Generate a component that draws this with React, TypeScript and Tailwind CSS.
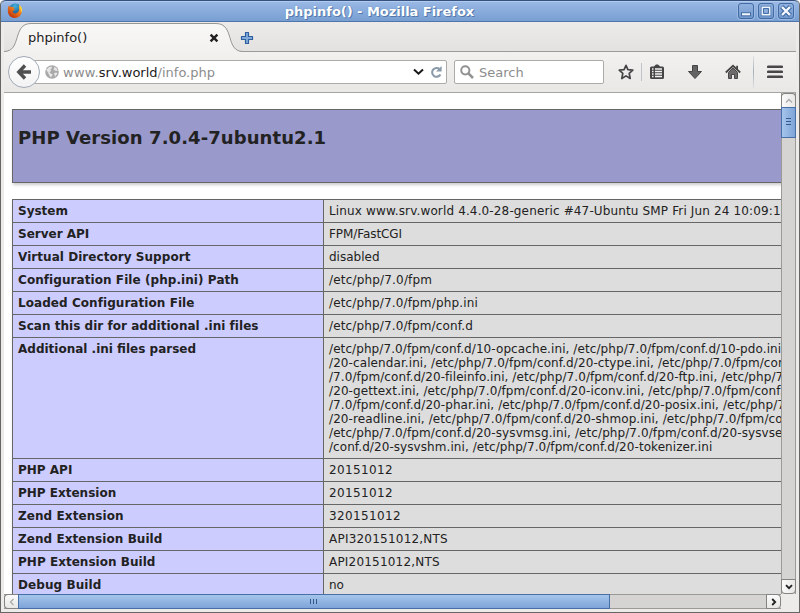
import type { ReactNode } from "react";

type Line = { text: string; tracking: string };
type Row = { name: string; nameTracking: string; lines: Line[] };

const rows: Row[] = [
  {
    name: "System",
    nameTracking: "tracking-normal",
    lines: [
      {
        text: "Linux www.srv.world 4.4.0-28-generic #47-Ubuntu SMP Fri Jun 24 10:09:13 UTC",
        tracking: "tracking-[0.14px]",
      },
    ],
  },
  {
    name: "Server API",
    nameTracking: "tracking-normal",
    lines: [{ text: "FPM/FastCGI", tracking: "tracking-[-0.08px]" }],
  },
  {
    name: "Virtual Directory Support",
    nameTracking: "tracking-[0.05px]",
    lines: [{ text: "disabled", tracking: "tracking-normal" }],
  },
  {
    name: "Configuration File (php.ini) Path",
    nameTracking: "tracking-[0.07px]",
    lines: [{ text: "/etc/php/7.0/fpm", tracking: "tracking-[0.18px]" }],
  },
  {
    name: "Loaded Configuration File",
    nameTracking: "tracking-[0.06px]",
    lines: [{ text: "/etc/php/7.0/fpm/php.ini", tracking: "tracking-[0.15px]" }],
  },
  {
    name: "Scan this dir for additional .ini files",
    nameTracking: "tracking-[0.03px]",
    lines: [{ text: "/etc/php/7.0/fpm/conf.d", tracking: "tracking-[0.14px]" }],
  },
  {
    name: "Additional .ini files parsed",
    nameTracking: "tracking-normal",
    lines: [
      {
        text: "/etc/php/7.0/fpm/conf.d/10-opcache.ini, /etc/php/7.0/fpm/conf.d/10-pdo.ini,",
        tracking: "tracking-[0.09px]",
      },
      {
        text: "/20-calendar.ini, /etc/php/7.0/fpm/conf.d/20-ctype.ini, /etc/php/7.0/fpm/conf.d",
        tracking: "tracking-[0.09px]",
      },
      {
        text: "/7.0/fpm/conf.d/20-fileinfo.ini, /etc/php/7.0/fpm/conf.d/20-ftp.ini, /etc/php/7.0",
        tracking: "tracking-[0.07px]",
      },
      {
        text: "/20-gettext.ini, /etc/php/7.0/fpm/conf.d/20-iconv.ini, /etc/php/7.0/fpm/conf.d",
        tracking: "tracking-[0.1px]",
      },
      {
        text: "/7.0/fpm/conf.d/20-phar.ini, /etc/php/7.0/fpm/conf.d/20-posix.ini, /etc/php/7.0",
        tracking: "tracking-[0.08px]",
      },
      {
        text: "/20-readline.ini, /etc/php/7.0/fpm/conf.d/20-shmop.ini, /etc/php/7.0/fpm/conf.d",
        tracking: "tracking-[0.09px]",
      },
      {
        text: "/etc/php/7.0/fpm/conf.d/20-sysvmsg.ini, /etc/php/7.0/fpm/conf.d/20-sysvsem.ini",
        tracking: "tracking-[0.09px]",
      },
      {
        text: "/conf.d/20-sysvshm.ini, /etc/php/7.0/fpm/conf.d/20-tokenizer.ini",
        tracking: "tracking-[0.07px]",
      },
    ],
  },
  {
    name: "PHP API",
    nameTracking: "tracking-normal",
    lines: [{ text: "20151012", tracking: "tracking-[0.36px]" }],
  },
  {
    name: "PHP Extension",
    nameTracking: "tracking-normal",
    lines: [{ text: "20151012", tracking: "tracking-[0.36px]" }],
  },
  {
    name: "Zend Extension",
    nameTracking: "tracking-[0.08px]",
    lines: [{ text: "320151012", tracking: "tracking-[0.36px]" }],
  },
  {
    name: "Zend Extension Build",
    nameTracking: "tracking-[0.06px]",
    lines: [{ text: "API320151012,NTS", tracking: "tracking-[0.22px]" }],
  },
  {
    name: "PHP Extension Build",
    nameTracking: "tracking-[0.03px]",
    lines: [{ text: "API20151012,NTS", tracking: "tracking-[0.2px]" }],
  },
  {
    name: "Debug Build",
    nameTracking: "tracking-[0.08px]",
    lines: [{ text: "no", tracking: "tracking-normal" }],
  },
];

function FirefoxLogo() {
  return (
    <svg width="16" height="16" viewBox="0 0 16 16">
      <defs>
        <linearGradient id="fox" x1="1" y1="0" x2="0.2" y2="1">
          <stop offset="0" stopColor="#ffdf3c" />
          <stop offset="0.45" stopColor="#f07c1c" />
          <stop offset="1" stopColor="#b92c0c" />
        </linearGradient>
        <radialGradient id="globe" cx="0.5" cy="0.2" r="0.8">
          <stop offset="0" stopColor="#3fb4e0" />
          <stop offset="1" stopColor="#123572" />
        </radialGradient>
      </defs>
      <circle cx="8.2" cy="7.2" r="6.6" fill="url(#globe)" />
      <path
        d="M1.4 2.6L3 4.1C4 3.6 5 3.8 5.6 4.2L7.6 4C7 4.8 6.5 5.2 6.6 5.8L8 6.5C7.8 7.4 6.4 7.4 5.6 8C5.6 10 7.6 10.9 9.3 10.2C11.6 9.3 12.5 7.6 12 5.6C11.7 4.2 12 2.8 12.5 1.9C14.7 3.6 15.4 6.1 14.8 9C14 13 11.3 14.9 8 14.9C4 14.9 1.2 12.2 0.8 8.4C0.7 6.2 0.9 4.4 1.4 2.6Z"
        fill="url(#fox)"
      />
      <path d="M12.5 1.9C15 4 15.5 7 14.5 9.8C14 7.8 13.8 5.4 12.5 1.9Z" fill="#ffe04a" />
    </svg>
  );
}

function WindowButton({ children }: { children: ReactNode }) {
  return (
    <div className="h-4 w-4 rounded-[3px] border border-[#416aa3] bg-linear-to-b from-[#91b2df] to-[#7299cd] shadow-[0_0_0_1px_#9cb9e3]">
      <svg className="block" width="14" height="14" viewBox="0 0 14 14" fill="none">
        {children}
      </svg>
    </div>
  );
}

function TitleBar() {
  return (
    <div className="flex h-[22px] shrink-0 items-center rounded-t-[5px] border-t border-b border-t-[#35517f] border-b-[#4f75ab] bg-linear-to-b from-[#9ab9e6] to-[#789fd2] pr-[5px] pl-1.5 shadow-[inset_0_1px_0_#b2cbef]">
      <FirefoxLogo />
      <div className="flex-1 pt-0.5 pr-[2px] text-center text-[13px] leading-5 font-bold tracking-[-0.03px] text-white [text-shadow:1px_1px_0_#5578aa,0_0_1px_#5578aa]">
        phpinfo() - Mozilla Firefox
      </div>
      <div className="flex gap-1">
        <WindowButton>
          <path d="M2 8.3H12V12.3H2Z" fill="#416aa3" />
          <path d="M3 9.2H11V11.3H3Z" fill="#f1f6fd" />
        </WindowButton>
        <WindowButton>
          <path d="M1.8 1.8H12.2V12.2H1.8Z" fill="#416aa3" />
          <path d="M3.2 3.2H10.8V10.8H3.2Z" fill="#8fb0de" stroke="#eef4fd" strokeWidth="1.4" />
          <path d="M4.6 4.6H9.4V9.4H4.6Z" stroke="#416aa3" strokeWidth="1" />
        </WindowButton>
        <WindowButton>
          <path d="M2.6 2.6L11.4 11.4M11.4 2.6L2.6 11.4" stroke="#416aa3" strokeWidth="4.4" />
          <path d="M3 3L11 11M11 3L3 11" stroke="#f5f9ff" strokeWidth="2.4" />
        </WindowButton>
      </div>
    </div>
  );
}

function TabStrip() {
  return (
    <div className="relative h-[30px] shrink-0 border-b border-[#9b9b98] bg-linear-to-b from-[#ecebe9] to-[#e3e2e0]">
      <svg className="absolute top-0 left-0" width="240" height="30" viewBox="0 0 240 30">
        <defs>
          <linearGradient id="tab" x1="0" y1="0" x2="0" y2="1">
            <stop offset="0" stopColor="#f8f8f7" />
            <stop offset="1" stopColor="#f2f1f0" />
          </linearGradient>
        </defs>
        <path
          d="M0 29.5C18 29.5 8 1.5 27 1.5H212C231 1.5 221 29.5 239 29.5V30H0Z"
          fill="url(#tab)"
        />
        <path
          d="M0 29.5C18 29.5 8 1.5 27 1.5H212C231 1.5 221 29.5 239 29.5"
          fill="none"
          stroke="#969693"
        />
      </svg>
      <div className="relative flex h-[30px] items-center pt-0.5 pl-6 text-[13px] text-[#1c1c1c]">
        <span className="w-[180px]">phpinfo()</span>
        <svg width="12" height="12" viewBox="0 0 12 12">
          <path d="M2.6 2.6L9.4 9.4M9.4 2.6L2.6 9.4" stroke="#222" strokeWidth="2.4" />
        </svg>
        <svg width="14" height="14" viewBox="0 0 14 14" className="ml-5">
          <path
            d="M5.5 1.5H8.5V5.5H12.5V8.5H8.5V12.5H5.5V8.5H1.5V5.5H5.5Z"
            fill="#82abd9"
            stroke="#2f5f9f"
            strokeWidth="1.2"
            strokeLinejoin="round"
          />
        </svg>
      </div>
    </div>
  );
}

function NavBar() {
  return (
    <div className="relative flex h-[41px] shrink-0 items-center border-b border-[#a5a5a2] bg-linear-to-b from-[#f2f1f0] to-[#e9e8e6] pl-5">
      <div className="absolute top-1 left-1 z-10 flex h-8 w-8 items-center justify-center rounded-full border border-[#a1aab5] bg-linear-to-b from-white to-[#f3f3f3]">
        <svg width="16" height="16" viewBox="0 0 16 16" fill="none">
          <path d="M9 1.5L2.8 8L9 14.5M3 8H15" stroke="#4f4f4f" strokeWidth="3.4" />
        </svg>
      </div>
      <div className="flex h-6 w-[423px] shrink-0 items-center rounded-r-[2px] border border-[#adaba8] bg-white pl-5 text-[13px]">
        <svg width="14" height="14" viewBox="0 0 14 14">
          <circle cx="7" cy="7" r="6.8" fill="#a9a9a9" />
          <path
            d="M1.2 4.8L4 2.3L6.5 1.5L7 3L5.2 4.4L6.4 6L4.3 7.1L5.6 8.5L7.8 9.5L6 12.6L4.4 10.6L3 7.4ZM9 1.8L11.6 3.2L12.7 6L10.6 5.7L8.4 4.8L9.2 3.4ZM9 8L11.5 7.6L12.4 8.8L10 11.8Z"
            fill="#e7e7e7"
          />
        </svg>
        <span className="ml-1 flex-1 pt-px text-[#8c8c8c]">
          <span className="tracking-[0.25px]">www.</span>
          <span className="text-[#1c1c1c]">srv.world</span>/info.php
        </span>
        <svg width="11" height="8" viewBox="0 0 11 8" fill="none" className="mr-px">
          <path d="M1 1.5L5.5 5.7L10 1.5" stroke="#181818" strokeWidth="2" />
        </svg>
        <svg width="14" height="14" viewBox="0 0 14 14" fill="none" className="mr-[3px] ml-1">
          <path d="M10.5 4.1A4.4 4.4 0 1 0 11.4 9.5" stroke="#8a9aa8" strokeWidth="2.1" />
          <path d="M12.6 1V6.6H7Z" fill="#8a9aa8" />
        </svg>
      </div>
      <div className="ml-[7px] flex h-6 w-[150px] shrink-0 items-center rounded-[2px] border border-[#adaba8] bg-white pl-[5px] text-[13px] text-[#8c8c8c]">
        <svg width="14" height="14" viewBox="0 0 14 14" fill="none">
          <circle cx="5.3" cy="5.3" r="4.1" stroke="#929292" strokeWidth="2" />
          <path d="M8.2 8.2L13 13" stroke="#929292" strokeWidth="2.5" />
        </svg>
        <span className="ml-[5px] pt-px">Search</span>
      </div>
      <svg width="16" height="16" viewBox="0 0 16 16" className="ml-[14px]" fill="none">
        <path
          d="M8 1.4L9.9 5.7L14.8 6.2L11.2 9.3L12.2 14.5L8 11.9L3.8 14.5L4.8 9.3L1.2 6.2L6.1 5.7Z"
          stroke="#454545"
          strokeWidth="1.7"
          strokeLinejoin="round"
        />
      </svg>
      <div className="ml-[7px] h-[18px] w-px bg-[#bfc4ca]" />
      <svg width="14" height="16" viewBox="0 0 14 16" className="ml-2">
        <path
          d="M1.5 2.5H3.8L6 .6H8L10.2 2.5H12.5Q14 2.5 14 4V13.5Q14 15 12.5 15H1.5Q0 15 0 13.5V4Q0 2.5 1.5 2.5Z"
          fill="#454545"
        />
        <path
          d="M2 5H3.5M5 5H12M2 7.5H3.5M5 7.5H12M2 10H3.5M5 10H12M2 12.5H3.5M5 12.5H12"
          stroke="#f4f4f3"
          strokeWidth="1.6"
        />
      </svg>
      <svg width="16" height="16" viewBox="0 0 16 16" className="ml-[23px]">
        <path d="M5.5 1.5H10.5V7.5H14.5L8 14.5L1.5 7.5H5.5Z" fill="#636363" stroke="#444" strokeLinejoin="round" />
      </svg>
      <svg width="16" height="16" viewBox="0 0 16 16" className="ml-[22px]">
        <path d="M3.5 8.5L8 4L12.5 8.5V14.5H9.5V10.5H6.5V14.5H3.5Z" fill="#6b6b6b" stroke="#484848" />
        <path d="M.8 8.5L8 1.8L15.2 8.5" fill="none" stroke="#454545" strokeWidth="1.8" />
        <path d="M11.2 1.7H13V5H11.2Z" fill="#454545" />
      </svg>
      <div className="ml-[12px] h-8 w-px bg-linear-to-b from-[#dfe2e5] via-[#a3b0bd] to-[#dfe2e5]" />
      <svg width="16" height="14" viewBox="0 0 16 14" className="ml-[13px]">
        <path d="M1.2 1.8H14.8M1.2 6.8H14.8M1.2 11.8H14.8" stroke="#484848" strokeWidth="2.6" strokeLinecap="round" />
      </svg>
    </div>
  );
}

function PhpInfoPage() {
  return (
    <div className="h-[501px] w-[777px] overflow-hidden bg-white pt-4 pl-2 text-xs leading-[14px] whitespace-nowrap text-[#222]">
      <div className="h-[74px] w-[934px] border border-[#666] bg-[#9999cc] pt-[17px] pl-[5px] shadow-[1px_2px_3px_#ccc]">
        <h1 className="text-[18px] leading-[21px] font-bold tracking-[0.08px]">PHP Version 7.0.4-7ubuntu2.1</h1>
      </div>
      <table className="mt-4 w-[934px] table-fixed border-collapse border border-[#666] shadow-[1px_2px_3px_#ccc]">
        <tbody>
          {rows.map((row) => (
            <tr key={row.name}>
              <td
                className={`w-[311px] border border-[#666] bg-[#ccccff] px-[5px] py-1 align-top font-bold ${row.nameTracking}`}
              >
                {row.name}
              </td>
              <td className="border border-[#666] bg-[#dddddd] px-[5px] py-1 align-top">
                {row.lines.map((line) => (
                  <div key={line.text} className={line.tracking}>
                    {line.text}
                  </div>
                ))}
              </td>
            </tr>
          ))}
        </tbody>
      </table>
    </div>
  );
}

function VerticalScrollbar() {
  return (
    <div className="flex h-[501px] w-[15px] flex-col border-x border-[#9c9a95] bg-[#d5d4d2]">
      <div className="mx-[-1px] flex h-[14px] items-center justify-center rounded-t-[4px] border border-b-0 border-[#85837f] bg-linear-to-r from-[#fbfbfb] to-[#e8e7e5]">
        <svg width="8" height="6" viewBox="0 0 8 6" fill="none">
          <path d="M1 4.5L4 1.5L7 4.5" stroke="#aaa" strokeWidth="1.3" />
        </svg>
      </div>
      <div className="mx-[-1px] flex h-[31px] flex-col items-center justify-center gap-0.5 border border-[#466fa8] bg-linear-to-r from-[#a5c5eb] to-[#7ea4d8] pb-0.5">
        <div className="h-px w-[5px] bg-[#34598e]" />
        <div className="h-px w-[5px] bg-[#34598e]" />
        <div className="h-px w-[5px] bg-[#34598e]" />
      </div>
      <div className="flex-1" />
      <div className="mx-[-1px] flex h-[15px] items-center justify-center rounded-b-[4px] border border-[#85837f] bg-linear-to-r from-[#fbfbfb] to-[#e8e7e5]">
        <svg width="8" height="6" viewBox="0 0 8 6" fill="none">
          <path d="M1 1.2L4 4.2L7 1.2" stroke="#222" strokeWidth="1.8" />
        </svg>
      </div>
    </div>
  );
}

function HorizontalScrollbar() {
  return (
    <div className="flex h-[15px] w-[777px] border-y border-[#9c9a95] bg-[#d5d4d2]">
      <div className="my-[-1px] flex w-[14px] items-center justify-center rounded-l-[4px] border border-r-0 border-[#85837f] bg-linear-to-b from-[#fbfbfb] to-[#e8e7e5]">
        <svg width="6" height="8" viewBox="0 0 6 8" fill="none">
          <path d="M4.5 1L1.5 4L4.5 7" stroke="#aaa" strokeWidth="1.3" />
        </svg>
      </div>
      <div className="my-[-1px] flex w-[592px] items-center justify-center gap-0.5 border border-[#466fa8] bg-linear-to-b from-[#a5c5eb] to-[#7ea4d8] pr-px">
        <div className="h-[5px] w-px bg-[#34598e]" />
        <div className="h-[5px] w-px bg-[#34598e]" />
        <div className="h-[5px] w-px bg-[#34598e]" />
      </div>
      <div className="flex-1" />
      <div className="my-[-1px] flex w-[15px] items-center justify-center rounded-r-[4px] border border-[#85837f] bg-linear-to-b from-[#fbfbfb] to-[#e8e7e5]">
        <svg width="6" height="8" viewBox="0 0 6 8" fill="none">
          <path d="M1.2 1L4.2 4L1.2 7" stroke="#222" strokeWidth="1.8" />
        </svg>
      </div>
    </div>
  );
}

export default function App() {
  return (
    <div className="h-[613px] w-[800px] overflow-hidden bg-white font-['DejaVu_Sans',sans-serif]">
      <div className="flex h-[613px] flex-col rounded-t-[5px] border-r border-b border-l border-[#686664] bg-[#edebea]">
        <TitleBar />
        <div className="flex flex-col pr-[3px] pl-[3px]">
          <TabStrip />
          <NavBar />
          <div className="flex">
            <PhpInfoPage />
            <VerticalScrollbar />
          </div>
          <HorizontalScrollbar />
        </div>
      </div>
    </div>
  );
}
